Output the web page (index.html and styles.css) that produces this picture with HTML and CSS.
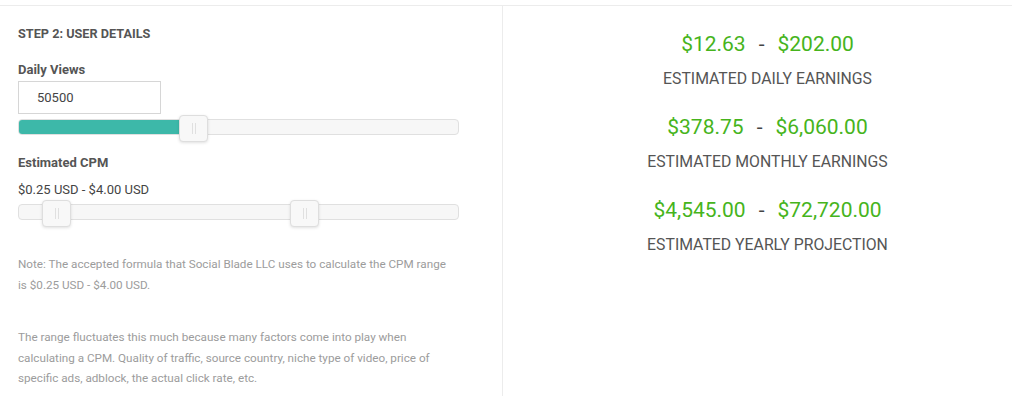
FILE: index.html
```html
<!DOCTYPE html>
<html>
<head>
<meta charset="utf-8">
<link rel="stylesheet" href="styles.css">
</head>
<body>
<div class="wrap">
  <div class="left">
    <h3 class="step">STEP 2: USER DETAILS</h3>
    <div class="label">Daily Views</div>
    <div class="input">50500</div>
    <div class="track">
      <div class="fill" style="width:38%"></div>
      <div class="handle" style="left:160px"></div>
    </div>
    <div class="label cpm">Estimated CPM</div>
    <div class="range">$0.25 USD - $4.00 USD</div>
    <div class="track second">
      <div class="handle" style="left:23px"></div>
      <div class="handle" style="left:271px"></div>
    </div>
    <p class="note first">Note: The accepted formula that Social Blade LLC uses to calculate the CPM range is $0.25 USD - $4.00 USD.</p>
    <p class="note">The range fluctuates this much because many factors come into play when calculating a CPM. Quality of traffic, source country, niche type of video, price of specific ads, adblock, the actual click rate, etc.</p>
  </div>
  <div class="right">
    <div class="block">
      <div class="money"><span>$12.63</span><span class="dash">-</span><span>$202.00</span></div>
      <div class="cap">ESTIMATED DAILY EARNINGS</div>
    </div>
    <div class="block">
      <div class="money"><span>$378.75</span><span class="dash">-</span><span>$6,060.00</span></div>
      <div class="cap">ESTIMATED MONTHLY EARNINGS</div>
    </div>
    <div class="block">
      <div class="money"><span>$4,545.00</span><span class="dash">-</span><span>$72,720.00</span></div>
      <div class="cap">ESTIMATED YEARLY PROJECTION</div>
    </div>
  </div>
</div>
</body>
</html>
```

FILE: styles.css
```css
* { box-sizing: border-box; }
html, body { margin: 0; padding: 0; background: #fff; }
body {
  font-family: Roboto, "Liberation Sans", Arial, sans-serif;
  color: #555;
  padding-top: 5px;
}
.wrap {
  width: 1012px;
  height: 391px;
  border-top: 1px solid #ececec;
  display: flex;
}
.left {
  width: 503px;
  padding: 21px 0 0 18px;
  border-right: 1px solid #ececec;
}
.step {
  margin: 0;
  font-size: 12.7px;
  font-weight: 700;
  color: #555;
  line-height: 14px;
}
.label {
  margin-top: 21px;
  font-size: 13px;
  font-weight: 700;
  color: #555;
  line-height: 16px;
}
.label.cpm { margin-top: 20px; }
.input {
  margin-top: 3px;
  width: 143px;
  height: 33px;
  border: 1px solid #d6d6d6;
  padding-left: 18px;
  font-size: 13px;
  line-height: 31px;
  color: #444;
}
.track {
  position: relative;
  margin-top: 5px;
  width: 441px;
  height: 16px;
  border: 1px solid #e0e0e0;
  border-radius: 4px;
  background: #f7f7f7;
}
.track.second { margin-top: 6px; }
.fill {
  height: 100%;
  background: #3db8a9;
  border-radius: 3px 0 0 3px;
}
.handle {
  position: absolute;
  top: -5px;
  width: 29px;
  height: 27px;
  background: #f8f8f8;
  border: 1px solid #dedede;
  border-radius: 4px;
  box-shadow: 0 1px 3px rgba(0,0,0,0.12);
}
.handle::before, .handle::after {
  content: "";
  position: absolute;
  top: 7px;
  width: 1px;
  height: 11px;
  background: #e0e0e0;
}
.handle::before { left: 12px; }
.handle::after { left: 15px; }
.range {
  margin-top: 11px;
  font-size: 13px;
  line-height: 16px;
  color: #444;
}
.note {
  margin: 0;
  width: 432px;
  font-size: 11.7px;
  line-height: 20.5px;
  color: #9c9c9c;
}
.note.first { margin-top: 34px; margin-bottom: 32px; }
.right {
  flex: 1;
  padding: 25px 0 0 20px;
  text-align: center;
}
.block { height: 83px; }
.money {
  font-size: 21px;
  line-height: 26px;
  color: #46b41c;
}
.dash { color: #444; margin: 0 13px; }
.cap {
  margin-top: 13px;
  font-size: 15.8px;
  line-height: 18px;
  color: #555;
}
```
